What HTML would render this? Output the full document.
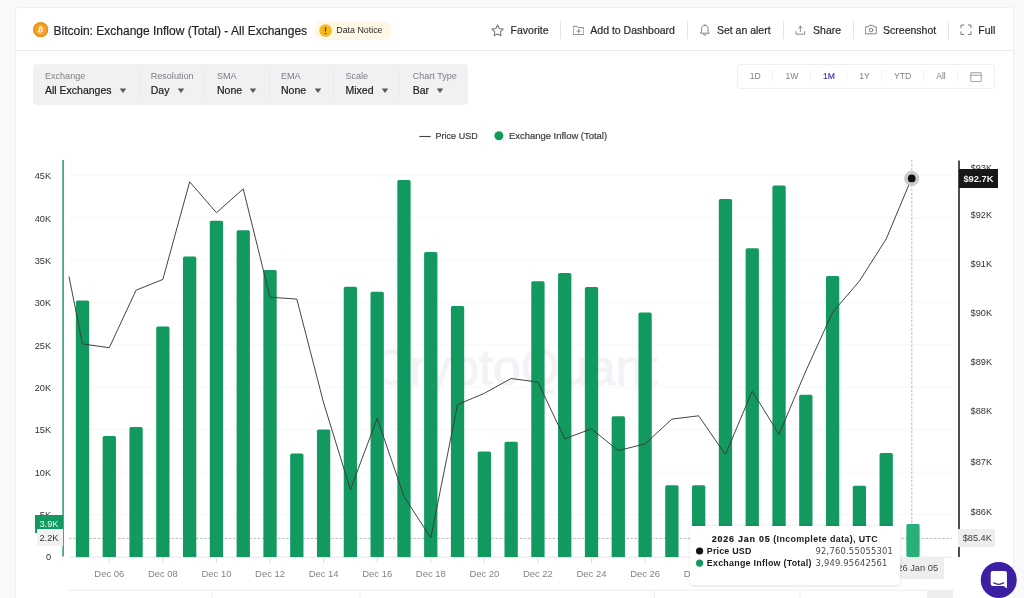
<!DOCTYPE html>
<html lang="en"><head><meta charset="utf-8"><title>Bitcoin: Exchange Inflow (Total) - All Exchanges</title>
<style>
*{box-sizing:border-box;margin:0;padding:0}
html,body{width:1024px;height:598px;overflow:hidden;background:#f9f9fa;font-family:"Liberation Sans",Arial,sans-serif;}
body{will-change:transform;position:relative}
.t{position:absolute;white-space:nowrap;}
.abs{position:absolute}
#card{position:absolute;left:14.6px;top:7px;width:999.2px;height:640px;background:#fff;border:1px solid #f0f0f1;border-radius:3px;}
#hline{position:absolute;left:15px;top:50.2px;width:998px;height:1px;background:#ebebec}
#filters{position:absolute;left:33px;top:64px;width:435px;height:41px;background:#f1f1f4;border-radius:4px}
.fsep{position:absolute;top:69px;height:31px;width:1px;background:#ebebee}
.hsep{position:absolute;top:20.6px;height:18.4px;width:1px;background:#e4e4e6}
.caret{position:absolute;width:0;height:0;border-left:3.5px solid transparent;border-right:3.5px solid transparent;border-top:4.5px solid #5c5c5c}
#range{position:absolute;left:737.4px;top:63.8px;width:257.4px;height:24.8px;border:1px solid #efeff1;border-radius:3px;background:#fff}
.rsep{position:absolute;top:70px;height:12.4px;width:1px;background:#f3f3f5}
svg{position:absolute;left:0;top:0}
</style></head><body>
<div id="card"></div>
<div id="hline"></div>
<svg style="left:32.9px;top:22.1px" width="15.3" height="15.3" viewBox="0 0 32 32"><circle cx="16" cy="16" r="16" fill="#ea9016"/><circle cx="16" cy="16" r="12.500" fill="#f5a32c"/><path fill="#fff" transform="translate(16 16) scale(.86) translate(-16 -16)" d="M21.6 14.4c.3-1.9-1.2-2.9-3.1-3.6l.6-2.500-1.500-.4-.6 2.500-1.200-.3.600-2.500-1.500-.4-.6 2.500-3.100-.8-.4 1.600s1.100.3 1.100.3c.6.200.7.600.700.900l-1.700 6.900c-.1.200-.3.500-.700.400l-1.100-.300-.700 1.700 2.900.700-.600 2.600 1.500.4.600-2.500 1.200.3-.6 2.500 1.500.4.600-2.600c2.600.5 4.600.3 5.400-2.100.7-1.900 0-3-1.400-3.700 1-.2 1.700-.9 1.900-2.200zm-3.500 4.800c-.5 1.900-3.700.900-4.700.600l.8-3.400c1 .3 4.400.8 3.900 2.800zm.5-4.900c-.4 1.700-3.100.900-4 .600l.8-3.100c.9.200 3.700.600 3.200 2.500z"/></svg>
<div class="t" style="left:53.6px;top:23px;font-size:12px;line-height:16px;color:#262626;font-weight:400;-webkit-text-stroke:.2px #262626;">Bitcoin: Exchange Inflow (Total) - All Exchanges</div>
<div class="abs" style="left:314.3px;top:20.7px;width:77.4px;height:19px;border-radius:9.5px;background:#fef7e4"></div>
<svg style="left:319.2px;top:23.7px" width="13" height="13" viewBox="0 0 13 13"><circle cx="6.500" cy="6.500" r="6.300" fill="#f6b91c"/><rect x="5.900" y="3" width="1.200" height="4.600" rx=".4" fill="#5a3d00"/><circle cx="6.500" cy="9.500" r=".8" fill="#5a3d00"/></svg>
<div class="t" style="left:336.3px;top:22px;font-size:8.85px;line-height:16px;color:#2c2c2c;font-weight:400;">Data Notice</div>
<svg style="left:491.1px;top:24.0px" width="13.2" height="12.65" viewBox="0 0 24 23" fill="none" stroke="#767676" stroke-width="1.9" stroke-linejoin="round" stroke-linecap="round"><path d="M12 1.8l3.1 6.500 7.100 1-5.100 5 1.200 7.100L12 18.100l-6.300 3.300 1.200-7.100-5.100-5 7.100-1z"/></svg>
<div class="t" style="left:510.6px;top:22px;font-size:10.5px;line-height:16px;color:#2a2a2a;font-weight:400;-webkit-text-stroke:.2px #2a2a2a;">Favorite</div>
<div class="hsep" style="left:560.0px"></div>
<svg style="left:572.8px;top:24.6px" width="11.4" height="10.4" viewBox="0 0 22 20" fill="none" stroke="#767676" stroke-width="1.7" stroke-linejoin="round" stroke-linecap="round"><path d="M1 2.500h6.500l2.300 2.600H21v13.400H1z"/><path d="M11 8.800v6M8 11.800h6"/></svg>
<div class="t" style="left:590.3px;top:22px;font-size:10.5px;line-height:16px;color:#2a2a2a;font-weight:400;-webkit-text-stroke:.2px #2a2a2a;">Add to Dashboard</div>
<div class="hsep" style="left:686.8px"></div>
<svg style="left:699.3px;top:23.5px" width="11.6" height="12.4" viewBox="0 0 22 24" fill="none" stroke="#767676" stroke-width="1.8" stroke-linejoin="round" stroke-linecap="round"><path d="M11 2.200c-3.700 0-6.300 2.900-6.300 6.600v5.400l-2.200 3.600h17l-2.200-3.600V8.800c0-3.700-2.600-6.600-6.300-6.600z"/><path d="M8.500 20.300c.5 1 1.400 1.600 2.500 1.600s2-.6 2.500-1.600"/></svg>
<div class="t" style="left:716.9px;top:22px;font-size:10.5px;line-height:16px;color:#2a2a2a;font-weight:400;-webkit-text-stroke:.2px #2a2a2a;">Set an alert</div>
<div class="hsep" style="left:783.1px"></div>
<svg style="left:795.4px;top:24.6px" width="10.6" height="10.2" viewBox="0 0 22 21" fill="none" stroke="#767676" stroke-width="1.8" stroke-linejoin="round" stroke-linecap="round"><path d="M2 13.500v5.500h18v-5.500"/><path d="M11 14V2.500M7 6.300l4-4 4 4"/></svg>
<div class="t" style="left:813.1px;top:22px;font-size:10.5px;line-height:16px;color:#2a2a2a;font-weight:400;-webkit-text-stroke:.2px #2a2a2a;">Share</div>
<div class="hsep" style="left:852.5px"></div>
<svg style="left:864.6px;top:24.4px" width="12" height="10.6" viewBox="0 0 24 21" fill="none" stroke="#767676" stroke-width="1.8" stroke-linejoin="round" stroke-linecap="round"><path d="M1.500 5.500h5.300l1.700-3h7l1.700 3h5.300v14h-21z"/><circle cx="12" cy="12" r="3.600"/></svg>
<div class="t" style="left:883.1px;top:22px;font-size:10.5px;line-height:16px;color:#2a2a2a;font-weight:400;-webkit-text-stroke:.2px #2a2a2a;">Screenshot</div>
<div class="hsep" style="left:947.7px"></div>
<svg style="left:960px;top:24.2px" width="12" height="11.6" viewBox="0 0 24 23" fill="none" stroke="#767676" stroke-width="2.0" stroke-linejoin="round" stroke-linecap="round"><path d="M2 7.500V2h5.500M16.500 2H22v5.500M22 15.500V21h-5.500M7.500 21H2v-5.500"/></svg>
<div class="t" style="left:978.3px;top:22px;font-size:10.5px;line-height:16px;color:#2a2a2a;font-weight:400;-webkit-text-stroke:.2px #2a2a2a;">Full</div>
<div id="filters"></div>
<div class="t" style="left:45px;top:68px;font-size:9.05px;line-height:16px;color:#7e7e82;font-weight:400;">Exchange</div>
<div class="t" style="left:45px;top:82px;font-size:10.5px;line-height:16px;color:#202020;font-weight:400;-webkit-text-stroke:.2px #202020;">All Exchanges</div>
<svg style="left:118.50px;top:88px" width="8" height="6" viewBox="0 0 8 6"><path d="M0.700 0.600H7.300L4 4.900Z" fill="#5a5a5a"/></svg>
<div class="t" style="left:150.75px;top:68px;font-size:9.05px;line-height:16px;color:#7e7e82;font-weight:400;">Resolution</div>
<div class="t" style="left:150.75px;top:82px;font-size:10.5px;line-height:16px;color:#202020;font-weight:400;-webkit-text-stroke:.2px #202020;">Day</div>
<svg style="left:176.50px;top:88px" width="8" height="6" viewBox="0 0 8 6"><path d="M0.700 0.600H7.300L4 4.900Z" fill="#5a5a5a"/></svg>
<div class="t" style="left:217px;top:68px;font-size:9.05px;line-height:16px;color:#7e7e82;font-weight:400;">SMA</div>
<div class="t" style="left:217px;top:82px;font-size:10.5px;line-height:16px;color:#202020;font-weight:400;-webkit-text-stroke:.2px #202020;">None</div>
<svg style="left:249.00px;top:88px" width="8" height="6" viewBox="0 0 8 6"><path d="M0.700 0.600H7.300L4 4.900Z" fill="#5a5a5a"/></svg>
<div class="t" style="left:281px;top:68px;font-size:9.05px;line-height:16px;color:#7e7e82;font-weight:400;">EMA</div>
<div class="t" style="left:281px;top:82px;font-size:10.5px;line-height:16px;color:#202020;font-weight:400;-webkit-text-stroke:.2px #202020;">None</div>
<svg style="left:314.00px;top:88px" width="8" height="6" viewBox="0 0 8 6"><path d="M0.700 0.600H7.300L4 4.900Z" fill="#5a5a5a"/></svg>
<div class="t" style="left:345.5px;top:68px;font-size:9.05px;line-height:16px;color:#7e7e82;font-weight:400;">Scale</div>
<div class="t" style="left:345.5px;top:82px;font-size:10.5px;line-height:16px;color:#202020;font-weight:400;-webkit-text-stroke:.2px #202020;">Mixed</div>
<svg style="left:380.60px;top:88px" width="8" height="6" viewBox="0 0 8 6"><path d="M0.700 0.600H7.300L4 4.900Z" fill="#5a5a5a"/></svg>
<div class="t" style="left:412.7px;top:68px;font-size:9.05px;line-height:16px;color:#7e7e82;font-weight:400;">Chart Type</div>
<div class="t" style="left:412.7px;top:82px;font-size:10.5px;line-height:16px;color:#202020;font-weight:400;-webkit-text-stroke:.2px #202020;">Bar</div>
<svg style="left:436.30px;top:88px" width="8" height="6" viewBox="0 0 8 6"><path d="M0.700 0.600H7.300L4 4.900Z" fill="#5a5a5a"/></svg>
<div class="fsep" style="left:138.7px"></div>
<div class="fsep" style="left:204.3px"></div>
<div class="fsep" style="left:269.3px"></div>
<div class="fsep" style="left:332.8px"></div>
<div class="fsep" style="left:399.3px"></div>
<div id="range"></div>
<div class="t" style="left:605.3px;width:300px;text-align:center;top:68px;font-size:8.6px;line-height:16px;color:#818184;font-weight:400;">1D</div>
<div class="t" style="left:641.9px;width:300px;text-align:center;top:68px;font-size:8.6px;line-height:16px;color:#818184;font-weight:400;">1W</div>
<div class="t" style="left:679px;width:300px;text-align:center;top:68px;font-size:8.6px;line-height:16px;color:#4a40b8;font-weight:400;-webkit-text-stroke:0.2px #4a40b8;">1M</div>
<div class="t" style="left:714.5px;width:300px;text-align:center;top:68px;font-size:8.6px;line-height:16px;color:#818184;font-weight:400;">1Y</div>
<div class="t" style="left:752.7px;width:300px;text-align:center;top:68px;font-size:8.6px;line-height:16px;color:#818184;font-weight:400;">YTD</div>
<div class="t" style="left:791px;width:300px;text-align:center;top:68px;font-size:8.6px;line-height:16px;color:#818184;font-weight:400;">All</div>
<div class="rsep" style="left:772px"></div>
<div class="rsep" style="left:809.5px"></div>
<div class="rsep" style="left:846.1px"></div>
<div class="rsep" style="left:881px"></div>
<div class="rsep" style="left:923px"></div>
<div class="rsep" style="left:957px"></div>
<svg style="left:970px;top:71.8px" width="12" height="10.4" viewBox="0 0 24 21" fill="none" stroke="#8a8a8a" stroke-width="1.700" stroke-linejoin="round"><rect x="1.500" y="1.500" width="21" height="18" rx=".6"/><path d="M1.500 6.500h21"/></svg>
<svg style="left:415px;top:130px" width="95" height="13" viewBox="0 0 95 13"><rect x="4.400" y="5.950" width="11.200" height="1.100" fill="#444"/><circle cx="83.900" cy="5.700" r="4.500" fill="#11995f"/></svg>
<div class="t" style="left:435.6px;top:128px;font-size:9.02px;line-height:16px;color:#3c3c3c;font-weight:400;-webkit-text-stroke:.2px #3c3c3c;">Price USD</div>
<div class="t" style="left:509px;top:128px;font-size:9.45px;line-height:16px;color:#3c3c3c;font-weight:400;-webkit-text-stroke:.2px #3c3c3c;">Exchange Inflow (Total)</div>
<div class="t" id="wm" style="left:373px;top:338px;font-size:50.200px;line-height:60px;font-weight:400;color:#f3f3f7;-webkit-text-stroke:1.100px #f3f3f7">CryptoQuant</div>
<svg width="1024" height="598" viewBox="0 0 1024 598">
<line x1="69.5" x2="952" y1="514.57" y2="514.57" stroke="#f7f7f7" stroke-width="1"/>
<line x1="69.5" x2="952" y1="472.14" y2="472.14" stroke="#f7f7f7" stroke-width="1"/>
<line x1="69.5" x2="952" y1="429.71" y2="429.71" stroke="#f7f7f7" stroke-width="1"/>
<line x1="69.5" x2="952" y1="387.28" y2="387.28" stroke="#f7f7f7" stroke-width="1"/>
<line x1="69.5" x2="952" y1="344.85" y2="344.85" stroke="#f7f7f7" stroke-width="1"/>
<line x1="69.5" x2="952" y1="302.42" y2="302.42" stroke="#f7f7f7" stroke-width="1"/>
<line x1="69.5" x2="952" y1="259.99" y2="259.99" stroke="#f7f7f7" stroke-width="1"/>
<line x1="69.5" x2="952" y1="217.56" y2="217.56" stroke="#f7f7f7" stroke-width="1"/>
<line x1="69.5" x2="952" y1="175.13" y2="175.13" stroke="#f7f7f7" stroke-width="1"/>
<line x1="69" x2="952" y1="557.2" y2="557.2" stroke="#e6e6e6" stroke-width="1"/>
<line x1="109.29" x2="109.29" y1="557.5" y2="563" stroke="#dcdcdc" stroke-width="1"/>
<line x1="162.87" x2="162.87" y1="557.5" y2="563" stroke="#dcdcdc" stroke-width="1"/>
<line x1="216.45" x2="216.45" y1="557.5" y2="563" stroke="#dcdcdc" stroke-width="1"/>
<line x1="270.03" x2="270.03" y1="557.5" y2="563" stroke="#dcdcdc" stroke-width="1"/>
<line x1="323.61" x2="323.61" y1="557.5" y2="563" stroke="#dcdcdc" stroke-width="1"/>
<line x1="377.19" x2="377.19" y1="557.5" y2="563" stroke="#dcdcdc" stroke-width="1"/>
<line x1="430.77" x2="430.77" y1="557.5" y2="563" stroke="#dcdcdc" stroke-width="1"/>
<line x1="484.35" x2="484.35" y1="557.5" y2="563" stroke="#dcdcdc" stroke-width="1"/>
<line x1="537.93" x2="537.93" y1="557.5" y2="563" stroke="#dcdcdc" stroke-width="1"/>
<line x1="591.51" x2="591.51" y1="557.5" y2="563" stroke="#dcdcdc" stroke-width="1"/>
<line x1="645.09" x2="645.09" y1="557.5" y2="563" stroke="#dcdcdc" stroke-width="1"/>
<line x1="698.67" x2="698.67" y1="557.5" y2="563" stroke="#dcdcdc" stroke-width="1"/>
<line x1="752.25" x2="752.25" y1="557.5" y2="563" stroke="#dcdcdc" stroke-width="1"/>
<line x1="805.83" x2="805.83" y1="557.5" y2="563" stroke="#dcdcdc" stroke-width="1"/>
<line x1="859.41" x2="859.41" y1="557.5" y2="563" stroke="#dcdcdc" stroke-width="1"/>
<line x1="912.99" x2="912.99" y1="557.5" y2="563" stroke="#dcdcdc" stroke-width="1"/>
<line x1="69" x2="952" y1="538.4" y2="538.4" stroke="#b0b0b0" stroke-width="0.9" stroke-dasharray="2.400 1.700"/>
<line x1="911.8" x2="911.8" y1="160" y2="557" stroke="#b0b0b0" stroke-width="0.9" stroke-dasharray="2.400 1.700"/>
<path d="M75.85 556.9 V302.20 Q75.85 300.60 77.45 300.60 H87.55 Q89.15 300.60 89.15 302.20 V556.9 Z" fill="#11995f"/>
<path d="M102.64 556.9 V437.70 Q102.64 436.10 104.24 436.10 H114.34 Q115.94 436.10 115.94 437.70 V556.9 Z" fill="#11995f"/>
<path d="M129.43 556.9 V428.70 Q129.43 427.10 131.03 427.10 H141.13 Q142.73 427.10 142.73 428.70 V556.9 Z" fill="#11995f"/>
<path d="M156.22 556.9 V328.00 Q156.22 326.40 157.82 326.40 H167.92 Q169.52 326.40 169.52 328.00 V556.9 Z" fill="#11995f"/>
<path d="M183.01 556.9 V258.20 Q183.01 256.60 184.61 256.60 H194.71 Q196.31 256.60 196.31 258.20 V556.9 Z" fill="#11995f"/>
<path d="M209.80 556.9 V222.30 Q209.80 220.70 211.40 220.70 H221.50 Q223.10 220.70 223.10 222.30 V556.9 Z" fill="#11995f"/>
<path d="M236.59 556.9 V231.80 Q236.59 230.20 238.19 230.20 H248.29 Q249.89 230.20 249.89 231.80 V556.9 Z" fill="#11995f"/>
<path d="M263.38 556.9 V271.50 Q263.38 269.90 264.98 269.90 H275.08 Q276.68 269.90 276.68 271.50 V556.9 Z" fill="#11995f"/>
<path d="M290.17 556.9 V455.00 Q290.17 453.40 291.77 453.40 H301.87 Q303.47 453.40 303.47 455.00 V556.9 Z" fill="#11995f"/>
<path d="M316.96 556.9 V431.20 Q316.96 429.60 318.56 429.60 H328.66 Q330.26 429.60 330.26 431.20 V556.9 Z" fill="#11995f"/>
<path d="M343.75 556.9 V288.40 Q343.75 286.80 345.35 286.80 H355.45 Q357.05 286.80 357.05 288.40 V556.9 Z" fill="#11995f"/>
<path d="M370.54 556.9 V293.40 Q370.54 291.80 372.14 291.80 H382.24 Q383.84 291.80 383.84 293.40 V556.9 Z" fill="#11995f"/>
<path d="M397.33 556.9 V181.70 Q397.33 180.10 398.93 180.10 H409.03 Q410.63 180.10 410.63 181.70 V556.9 Z" fill="#11995f"/>
<path d="M424.12 556.9 V253.70 Q424.12 252.10 425.72 252.10 H435.82 Q437.42 252.10 437.42 253.70 V556.9 Z" fill="#11995f"/>
<path d="M450.91 556.9 V307.70 Q450.91 306.10 452.51 306.10 H462.61 Q464.21 306.10 464.21 307.70 V556.9 Z" fill="#11995f"/>
<path d="M477.70 556.9 V453.00 Q477.70 451.40 479.30 451.40 H489.40 Q491.00 451.40 491.00 453.00 V556.9 Z" fill="#11995f"/>
<path d="M504.49 556.9 V443.40 Q504.49 441.80 506.09 441.80 H516.19 Q517.79 441.80 517.79 443.40 V556.9 Z" fill="#11995f"/>
<path d="M531.28 556.9 V282.80 Q531.28 281.20 532.88 281.20 H542.98 Q544.58 281.20 544.58 282.80 V556.9 Z" fill="#11995f"/>
<path d="M558.07 556.9 V274.50 Q558.07 272.90 559.67 272.90 H569.77 Q571.37 272.90 571.37 274.50 V556.9 Z" fill="#11995f"/>
<path d="M584.86 556.9 V288.70 Q584.86 287.10 586.46 287.10 H596.56 Q598.16 287.10 598.16 288.70 V556.9 Z" fill="#11995f"/>
<path d="M611.65 556.9 V417.80 Q611.65 416.20 613.25 416.20 H623.35 Q624.95 416.20 624.95 417.80 V556.9 Z" fill="#11995f"/>
<path d="M638.44 556.9 V314.20 Q638.44 312.60 640.04 312.60 H650.14 Q651.74 312.60 651.74 314.20 V556.9 Z" fill="#11995f"/>
<path d="M665.23 556.9 V486.80 Q665.23 485.20 666.83 485.20 H676.93 Q678.53 485.20 678.53 486.80 V556.9 Z" fill="#11995f"/>
<path d="M692.02 556.9 V486.80 Q692.02 485.20 693.62 485.20 H703.72 Q705.32 485.20 705.32 486.80 V556.9 Z" fill="#11995f"/>
<path d="M718.81 556.9 V200.50 Q718.81 198.90 720.41 198.90 H730.51 Q732.11 198.90 732.11 200.50 V556.9 Z" fill="#11995f"/>
<path d="M745.60 556.9 V249.90 Q745.60 248.30 747.20 248.30 H757.30 Q758.90 248.30 758.90 249.90 V556.9 Z" fill="#11995f"/>
<path d="M772.39 556.9 V187.00 Q772.39 185.40 773.99 185.40 H784.09 Q785.69 185.40 785.69 187.00 V556.9 Z" fill="#11995f"/>
<path d="M799.18 556.9 V396.40 Q799.18 394.80 800.78 394.80 H810.88 Q812.48 394.80 812.48 396.40 V556.9 Z" fill="#11995f"/>
<path d="M825.97 556.9 V277.70 Q825.97 276.10 827.57 276.10 H837.67 Q839.27 276.10 839.27 277.70 V556.9 Z" fill="#11995f"/>
<path d="M852.76 556.9 V487.30 Q852.76 485.70 854.36 485.70 H864.46 Q866.06 485.70 866.06 487.30 V556.9 Z" fill="#11995f"/>
<path d="M879.55 556.9 V454.70 Q879.55 453.10 881.15 453.10 H891.25 Q892.85 453.10 892.85 454.70 V556.9 Z" fill="#11995f"/>
<rect x="906.35" y="524.10" width="13.3" height="32.80" rx="1.6" fill="#29b079"/>
<path d="M69.00 276.60 L82.50 344.00 L109.29 347.70 L136.08 290.20 L162.87 279.40 L189.66 181.80 L216.45 212.70 L243.24 188.90 L270.03 297.20 L296.82 299.10 L323.61 402.90 L350.40 489.70 L377.19 418.30 L403.98 496.50 L430.77 537.90 L457.56 404.60 L484.35 393.30 L511.14 378.50 L537.93 382.10 L564.72 438.80 L591.51 428.80 L618.30 450.60 L645.09 443.90 L671.88 419.10 L698.67 415.80 L725.46 454.60 L752.25 391.10 L779.04 434.30 L805.83 371.00 L832.62 312.30 L859.41 281.10 L886.20 239.00 L911.70 178.10" fill="none" stroke="#3a3a3a" stroke-width="0.95" stroke-linejoin="round"/>
<circle cx="911.7" cy="178.4" r="7.100" fill="#cfcfcf" stroke="#b5b5b5" stroke-width="0.6"/>
<circle cx="911.7" cy="178.4" r="3.900" fill="#111"/>
<line x1="63.1" x2="63.1" y1="160" y2="556.5" stroke="#3ba67a" stroke-width="1.700"/>
<line x1="959" x2="959" y1="160.5" y2="557" stroke="#1c1c1c" stroke-width="1.550"/>
<line x1="68" x2="953" y1="590.2" y2="590.2" stroke="#ececec" stroke-width="1"/>
<line x1="212" x2="212" y1="590" y2="598" stroke="#ececec" stroke-width="1"/>
<line x1="360" x2="360" y1="590" y2="598" stroke="#ececec" stroke-width="1"/>
<line x1="654.5" x2="654.5" y1="590" y2="598" stroke="#ececec" stroke-width="1"/>
<line x1="800" x2="800" y1="590" y2="598" stroke="#ececec" stroke-width="1"/>
<rect x="927" y="590" width="26" height="8" fill="#ededf0"/>
</svg>
<div class="t " style="right:972.9px;top:549px;font-size:9.2px;line-height:16px;color:#333;font-weight:400;">0</div>
<div class="t " style="right:972.9px;top:507px;font-size:9.2px;line-height:16px;color:#333;font-weight:400;">5K</div>
<div class="t " style="right:972.9px;top:465px;font-size:9.2px;line-height:16px;color:#333;font-weight:400;">10K</div>
<div class="t " style="right:972.9px;top:422px;font-size:9.2px;line-height:16px;color:#333;font-weight:400;">15K</div>
<div class="t " style="right:972.9px;top:380px;font-size:9.2px;line-height:16px;color:#333;font-weight:400;">20K</div>
<div class="t " style="right:972.9px;top:338px;font-size:9.2px;line-height:16px;color:#333;font-weight:400;">25K</div>
<div class="t " style="right:972.9px;top:295px;font-size:9.2px;line-height:16px;color:#333;font-weight:400;">30K</div>
<div class="t " style="right:972.9px;top:253px;font-size:9.2px;line-height:16px;color:#333;font-weight:400;">35K</div>
<div class="t " style="right:972.9px;top:211px;font-size:9.2px;line-height:16px;color:#333;font-weight:400;">40K</div>
<div class="t " style="right:972.9px;top:168px;font-size:9.2px;line-height:16px;color:#333;font-weight:400;">45K</div>
<div class="t " style="left:970.6px;top:160px;font-size:9.2px;line-height:16px;color:#333;font-weight:400;">$93K</div>
<div class="t " style="left:970.6px;top:207px;font-size:9.2px;line-height:16px;color:#333;font-weight:400;">$92K</div>
<div class="t " style="left:970.6px;top:256px;font-size:9.2px;line-height:16px;color:#333;font-weight:400;">$91K</div>
<div class="t " style="left:970.6px;top:305px;font-size:9.2px;line-height:16px;color:#333;font-weight:400;">$90K</div>
<div class="t " style="left:970.6px;top:354px;font-size:9.2px;line-height:16px;color:#333;font-weight:400;">$89K</div>
<div class="t " style="left:970.6px;top:403px;font-size:9.2px;line-height:16px;color:#333;font-weight:400;">$88K</div>
<div class="t " style="left:970.6px;top:454px;font-size:9.2px;line-height:16px;color:#333;font-weight:400;">$87K</div>
<div class="t " style="left:970.6px;top:504px;font-size:9.2px;line-height:16px;color:#333;font-weight:400;">$86K</div>
<div class="t " style="left:9.289999999999992px;width:200px;text-align:center;top:566px;font-size:9.45px;line-height:16px;color:#838383;font-weight:400;">Dec 06</div>
<div class="t " style="left:62.870000000000005px;width:200px;text-align:center;top:566px;font-size:9.45px;line-height:16px;color:#838383;font-weight:400;">Dec 08</div>
<div class="t " style="left:116.44999999999999px;width:200px;text-align:center;top:566px;font-size:9.45px;line-height:16px;color:#838383;font-weight:400;">Dec 10</div>
<div class="t " style="left:170.02999999999997px;width:200px;text-align:center;top:566px;font-size:9.45px;line-height:16px;color:#838383;font-weight:400;">Dec 12</div>
<div class="t " style="left:223.61px;width:200px;text-align:center;top:566px;font-size:9.45px;line-height:16px;color:#838383;font-weight:400;">Dec 14</div>
<div class="t " style="left:277.19px;width:200px;text-align:center;top:566px;font-size:9.45px;line-height:16px;color:#838383;font-weight:400;">Dec 16</div>
<div class="t " style="left:330.77px;width:200px;text-align:center;top:566px;font-size:9.45px;line-height:16px;color:#838383;font-weight:400;">Dec 18</div>
<div class="t " style="left:384.34999999999997px;width:200px;text-align:center;top:566px;font-size:9.45px;line-height:16px;color:#838383;font-weight:400;">Dec 20</div>
<div class="t " style="left:437.93000000000006px;width:200px;text-align:center;top:566px;font-size:9.45px;line-height:16px;color:#838383;font-weight:400;">Dec 22</div>
<div class="t " style="left:491.51px;width:200px;text-align:center;top:566px;font-size:9.45px;line-height:16px;color:#838383;font-weight:400;">Dec 24</div>
<div class="t " style="left:545.09px;width:200px;text-align:center;top:566px;font-size:9.45px;line-height:16px;color:#838383;font-weight:400;">Dec 26</div>
<div class="t " style="left:598.67px;width:200px;text-align:center;top:566px;font-size:9.45px;line-height:16px;color:#838383;font-weight:400;">Dec 28</div>
<div class="abs" style="left:35.3px;top:514.6px;width:28px;height:18.3px;background:#11995f"></div>
<div class="t" style="right:965.5px;top:516px;font-size:9.3px;line-height:16px;color:#eafff4;font-weight:400;">3.9K</div>
<div class="abs" style="left:36.5px;top:528.7px;width:26px;height:17.6px;background:#f2f2f3"></div>
<div class="t" style="right:965.5px;top:530px;font-size:9.3px;line-height:16px;color:#333;font-weight:400;">2.2K</div>
<div class="abs" style="left:959px;top:168.9px;width:39px;height:18.8px;background:#161616"></div>
<div class="t" style="left:828.5px;width:300px;text-align:center;top:171px;font-size:9.4px;line-height:16px;color:#f2f2f2;font-weight:700;">$92.7K</div>
<div class="abs" style="left:958.2px;top:529px;width:37px;height:17.8px;background:#eeeeef"></div>
<div class="t" style="left:827.3px;width:300px;text-align:center;top:530px;font-size:9.2px;line-height:16px;color:#3a3a3a;font-weight:400;">$85.4K</div>
<div class="abs" style="left:880px;top:557.8px;width:64px;height:20.9px;background:#eeeeef"></div>
<div class="t" style="left:762.5px;width:300px;text-align:center;top:560px;font-size:9.3px;line-height:16px;color:#444;font-weight:400;">2026 Jan 05</div>
<div class="abs" style="left:689.6px;top:526.3px;width:210.4px;height:59px;background:#fff;border-radius:2.500px;box-shadow:0 0.5px 3px rgba(0,0,0,.13)"></div>
<div class="t" style="left:711.75px;top:531px;font-size:8.9px;line-height:16px;color:#1c1c1c;font-weight:700;"><b style="letter-spacing:.8px;-webkit-text-stroke:.2px #1c1c1c">2026 Jan 05</b><span style="letter-spacing:.37px"> (Incomplete data), UTC</span></div>
<svg style="left:694px;top:545px" width="12" height="24" viewBox="0 0 12 24"><circle cx="5.600" cy="6" r="3.600" fill="#111"/><circle cx="5.600" cy="18.100" r="3.600" fill="#11995f"/></svg>
<div class="t" style="left:706.8px;top:543px;font-size:8.9px;line-height:16px;color:#1c1c1c;font-weight:700;letter-spacing:0.2px;">Price USD</div>
<div class="t" style="left:815.5px;top:543px;font-size:8.4px;line-height:16px;color:#4a4a4a;font-weight:400;letter-spacing:0.2px;font-family:'DejaVu Sans','Liberation Sans',sans-serif;">92,760.55055301</div>
<div class="t" style="left:706.8px;top:555px;font-size:8.9px;line-height:16px;color:#1c1c1c;font-weight:700;letter-spacing:0.26px;">Exchange Inflow (Total)</div>
<div class="t" style="left:815.5px;top:555px;font-size:8.4px;line-height:16px;color:#4a4a4a;font-weight:400;letter-spacing:0.2px;font-family:'DejaVu Sans','Liberation Sans',sans-serif;">3,949.95642561</div>
<svg style="left:976px;top:558px" width="48" height="40" viewBox="976 558 48 40"><circle cx="998.750" cy="580" r="18" fill="#3b20a4"/><path d="M992.700 570.900h12.200a2 2 0 0 1 2 2v15.500l-3.300-2.300h-10.900a2 2 0 0 1-2-2v-11.200a2 2 0 0 1 2-2z" fill="#fff"/><path d="M993.800 582.900q4.900 2.800 9.800 0" stroke="#3b20a4" stroke-width="1.250" fill="none" stroke-linecap="round"/></svg>
</body></html>
